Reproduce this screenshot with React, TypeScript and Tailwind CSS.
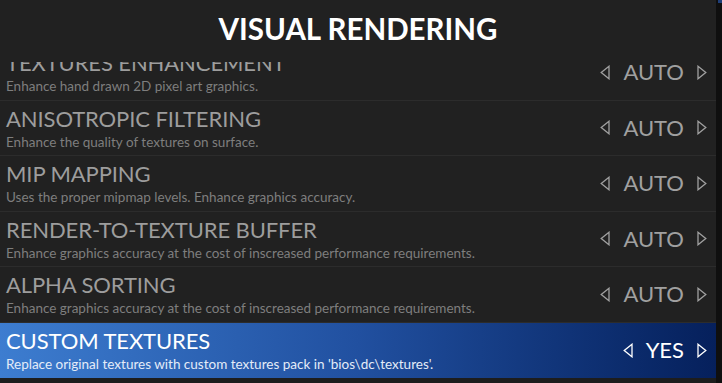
import React from 'react';

type Setting = {
  title: string;
  desc: string;
  value: string;
  active?: boolean;
};

const settings: Setting[] = [
  { title: 'TEXTURES ENHANCEMENT', desc: 'Enhance hand drawn 2D pixel art graphics.', value: 'AUTO' },
  { title: 'ANISOTROPIC FILTERING', desc: 'Enhance the quality of textures on surface.', value: 'AUTO' },
  { title: 'MIP MAPPING', desc: 'Uses the proper mipmap levels. Enhance graphics accuracy.', value: 'AUTO' },
  { title: 'RENDER-TO-TEXTURE BUFFER', desc: 'Enhance graphics accuracy at the cost of inscreased performance requirements.', value: 'AUTO' },
  { title: 'ALPHA SORTING', desc: 'Enhance graphics accuracy at the cost of inscreased performance requirements.', value: 'AUTO' },
  { title: 'CUSTOM TEXTURES', desc: "Replace original textures with custom textures pack in 'bios\\dc\\textures'.", value: 'YES', active: true },
];

// small outlined triangle used for the value switcher
function Arrow({ dir }: { dir: 'left' | 'right' }) {
  return (
    <svg width="10" height="15" viewBox="0 0 10 15" className="shrink-0">
      {dir === 'left' ? (
        <path d="M9 1.2 L1.2 7.5 L9 13.8 Z" fill="none" stroke="currentColor" strokeWidth="1.3" />
      ) : (
        <path d="M1 1.2 L8.8 7.5 L1 13.8 Z" fill="none" stroke="currentColor" strokeWidth="1.3" />
      )}
    </svg>
  );
}

function Row({ s, first }: { s: Setting; first?: boolean }) {
  return (
    <div
      className={
        'flex h-[55.5px] shrink-0 items-center pl-[6px] pr-[9px] ' +
        (s.active
          ? 'bg-gradient-to-r from-[#3d7dd0] via-[#2150a0] to-[#06205c]'
          : 'border-b border-[#2c2c2c]') +
        (first ? ' -mt-[17px]' : '')
      }
    >
      <div className="flex min-w-0 flex-1 flex-col">
        <div
          className={
            'text-[22px] leading-[25px] tracking-[-0.1px] ' + (s.active ? 'text-white' : 'text-[#9d9d9d]')
          }
        >
          {s.title}
        </div>
        <div
          className={
            'mt-[3px] text-[13.5px] leading-[16px] ' + (s.active ? 'text-[#e4ecf8]' : 'text-[#7e7e7e]')
          }
        >
          {s.desc}
        </div>
      </div>
      <div className={'flex items-center gap-[13px] ' + (s.active ? 'text-white' : 'text-[#a0a0a0]')}>
        <Arrow dir="left" />
        <span className="text-[22px] leading-none">{s.value}</span>
        <Arrow dir="right" />
      </div>
    </div>
  );
}

export default function App(): React.ReactElement {
  return (
    <div
      className="flex h-[383px] w-[722px] overflow-hidden bg-[#0f0f0f]"
      style={{ fontFamily: 'Lato, "Open Sans", sans-serif' }}
    >
      <div className="flex w-[716px] flex-col bg-[#212121]">
        {/* Header */}
        <div className="relative z-10 flex h-[62px] shrink-0 items-center justify-center bg-[#212121] pb-[4px]">
          <h1 className="text-[29.5px] font-bold leading-none text-white">VISUAL RENDERING</h1>
        </div>
        {/* List */}
        <div className="flex flex-1 flex-col overflow-hidden bg-[#1d1d1d]">
          <div className="flex flex-col bg-[#212121]">
            {settings.map((s, i) => (
              <Row key={s.title} s={s} first={i === 0} />
            ))}
          </div>
        </div>
      </div>
      {/* Scrollbar strip */}
      <div className="flex w-[6px] flex-col">
        <div className="ml-[2px] h-[3px] w-[4px] bg-[#1f3f7a]" />
      </div>
    </div>
  );
}
